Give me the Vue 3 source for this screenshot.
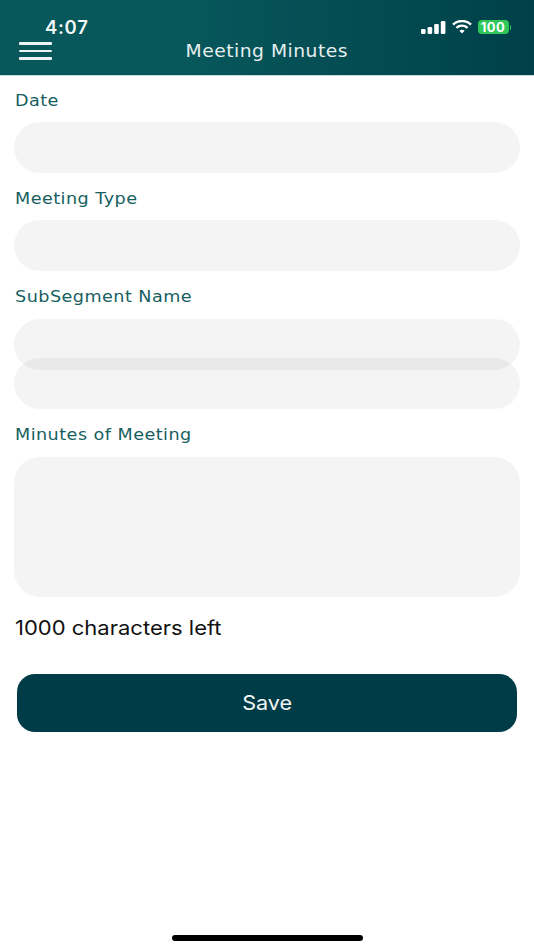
<template>
  <div class="screen">
    <header class="header">
      <div class="status">
        <span class="time">4:07</span>
        <div class="status-icons">
          <svg width="25" height="13" viewBox="0 0 25 13" class="signal">
            <rect x="0" y="8" width="4.6" height="5" rx="1.2" />
            <rect x="6.6" y="6" width="4.6" height="7" rx="1.2" />
            <rect x="13.2" y="3" width="4.6" height="10" rx="1.2" />
            <rect x="19.8" y="0" width="4.6" height="13" rx="1.2" />
          </svg>
          <svg width="20" height="14" viewBox="0 0 20 14" class="wifi">
            <path d="M1 4.6C6 -0.2 14 -0.2 19 4.6" />
            <path d="M4.4 7.8C7.6 4.9 12.4 4.9 15.6 7.8" />
            <path d="M10 13.4 7.4 10.7C8.9 9.4 11.1 9.4 12.6 10.7Z" class="wifi-dot" />
          </svg>
          <div class="battery"><span>100</span></div>
          <span class="battery-tip"></span>
        </div>
      </div>
      <div class="nav">
        <div class="menu"><i></i><i></i><i></i></div>
        <h1 class="title">Meeting Minutes</h1>
      </div>
    </header>

    <main class="form">
      <label class="label"><span>Date</span></label>
      <div class="field"></div>
      <label class="label"><span>Meeting Type</span></label>
      <div class="field"></div>
      <label class="label tall"><span>SubSegment Name</span></label>
      <div class="field"></div>
      <div class="field overlap"></div>
      <label class="label tall"><span>Minutes of Meeting</span></label>
      <div class="field area"></div>
      <p class="count">1000 characters left</p>
      <button class="save"><span>Save</span></button>
    </main>

    <div class="home"></div>
  </div>
</template>

<script setup>
</script>

<style scoped>
.screen {
  position: relative;
  width: 534px;
  height: 950px;
  background: #fff;
  overflow: hidden;
}
.header {
  height: 75px;
  background: linear-gradient(90deg, #07575b 0%, #07575b 35%, #004049 100%);
  color: #fff;
  box-shadow: 0 1px 0 #c9d8d8;
}
.status {
  display: flex;
  justify-content: space-between;
  align-items: center;
  height: 20px;
  padding: 17px 23px 0 45px;
}
.time {
  font: 600 18.5px/20px "Inter", sans-serif;
  letter-spacing: 0.7px;
  color: #f2f7f7;
}
.status-icons {
  display: flex;
  align-items: center;
}
.signal {
  fill: #fff;
  margin-right: 6px;
}
.wifi {
  margin-right: 6px;
  fill: none;
  stroke: #fff;
  stroke-width: 2.4;
}
.wifi-dot {
  fill: #fff;
  stroke: none;
}
.battery {
  width: 31px;
  height: 14px;
  border-radius: 4px;
  background: #2fc65a;
  display: flex;
  align-items: center;
  justify-content: center;
}
.battery span {
  font: 700 13px/14px "Inter", sans-serif;
  letter-spacing: 0.5px;
  color: #fff;
}
.battery-tip {
  width: 1.5px;
  height: 5px;
  margin-left: 1px;
  background: #2fc65a;
  border-radius: 0 1px 1px 0;
}
.nav {
  position: relative;
  display: flex;
  justify-content: center;
  height: 26px;
  padding-top: 1px;
}
.menu {
  position: absolute;
  left: 19px;
  top: 5px;
  width: 33px;
  display: flex;
  flex-direction: column;
  gap: 5px;
}
.menu i {
  display: block;
  height: 2.6px;
  background: #eef4f4;
  border-radius: 1px;
}
.title {
  margin: 0;
  font: 400 17px/26px "DejaVu Sans", sans-serif;
  letter-spacing: 0.45px;
  color: #e6efef;
  transform: scaleX(1.1);
}
.form {
  display: flex;
  flex-direction: column;
  padding: 0 14px;
}
.label {
  display: block;
  height: 47px;
  padding-top: 16px;
  box-sizing: border-box;
  font: 400 16px/20px "DejaVu Sans", sans-serif;
  letter-spacing: 0.42px;
  color: #17605f;
}
.label.tall {
  height: 48px;
}
.label span {
  display: inline-block;
  margin-left: 0.5px;
  transform: scaleX(1.1);
  transform-origin: left center;
}
.field {
  height: 51px;
  border-radius: 25.5px;
  background: rgba(0, 0, 0, 0.042);
}
.overlap {
  margin-top: -12px;
}
.area {
  height: 140px;
  border-radius: 26px;
}
.count {
  margin: 19px 0 0 1px;
  font: 400 20px/24px "Inter", sans-serif;
  color: #111;
  transform: scaleX(1.1);
  transform-origin: left center;
}
.save {
  margin: 34px 3px 0;
  height: 58px;
  border: none;
  border-radius: 18px;
  background: #003c47;
  color: #f2f5f5;
  font: 400 20px/24px "Inter", sans-serif;
}
.save span {
  display: inline-block;
  transform: scaleX(1.08);
}
.home {
  position: absolute;
  left: 172px;
  top: 935px;
  width: 191px;
  height: 6px;
  border-radius: 3px;
  background: #000;
}
</style>
<style>
body { margin: 0; background: #fff; }
</style>
